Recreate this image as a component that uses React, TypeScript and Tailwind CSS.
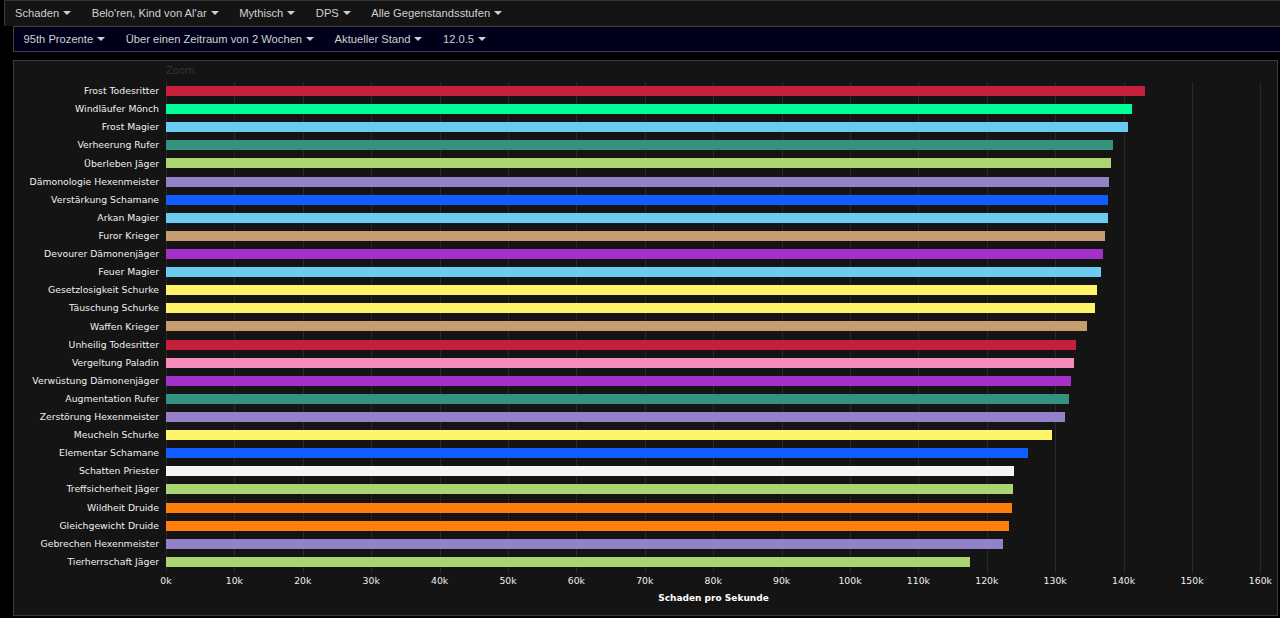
const mainMenu = ["Schaden", "Belo'ren, Kind von Al'ar", "Mythisch", "DPS", "Alle Gegenstandsstufen"];
const subMenu = ["95th Prozente", "Über einen Zeitraum von 2 Wochen", "Aktueller Stand", "12.0.5"];

const colors = {
  dk: "#c41f3b",
  monk: "#00ff96",
  mage: "#69ccf0",
  evoker: "#33937f",
  hunter: "#abd473",
  warlock: "#9482c9",
  shaman: "#0f5cff",
  warrior: "#c79c6e",
  dh: "#a330c9",
  rogue: "#fff569",
  paladin: "#f58cba",
  priest: "#f5f5f5",
  druid: "#ff7d0a",
};

// end of each bar in dps
const rows: [string, string, number][] = [
  ["Frost Todesritter", colors.dk, 143200],
  ["Windläufer Mönch", colors.monk, 141300],
  ["Frost Magier", colors.mage, 140700],
  ["Verheerung Rufer", colors.evoker, 138400],
  ["Überleben Jäger", colors.hunter, 138150],
  ["Dämonologie Hexenmeister", colors.warlock, 137900],
  ["Verstärkung Schamane", colors.shaman, 137650],
  ["Arkan Magier", colors.mage, 137650],
  ["Furor Krieger", colors.warrior, 137350],
  ["Devourer Dämonenjäger", colors.dh, 137000],
  ["Feuer Magier", colors.mage, 136750],
  ["Gesetzlosigkeit Schurke", colors.rogue, 136150],
  ["Täuschung Schurke", colors.rogue, 135800],
  ["Waffen Krieger", colors.warrior, 134600],
  ["Unheilig Todesritter", colors.dk, 133000],
  ["Vergeltung Paladin", colors.paladin, 132750],
  ["Verwüstung Dämonenjäger", colors.dh, 132300],
  ["Augmentation Rufer", colors.evoker, 132000],
  ["Zerstörung Hexenmeister", colors.warlock, 131500],
  ["Meucheln Schurke", colors.rogue, 129600],
  ["Elementar Schamane", colors.shaman, 126000],
  ["Schatten Priester", colors.priest, 123950],
  ["Treffsicherheit Jäger", colors.hunter, 123850],
  ["Wildheit Druide", colors.druid, 123700],
  ["Gleichgewicht Druide", colors.druid, 123300],
  ["Gebrechen Hexenmeister", colors.warlock, 122300],
  ["Tierherrschaft Jäger", colors.hunter, 117600],
];

const ticks = Array.from({ length: 17 }, (_, i) => i * 10);
const pxPerK = 6.84;

function Menu({ items }: { items: string[] }) {
  return (
    <ul className="flex font-['Liberation_Sans',sans-serif] text-[11.2px] text-[#d0d0d0]">
      {items.map((item) => (
        <li key={item} className="flex items-center gap-[4px] pr-[20.5px]">
          {item}
          <span className="h-0 w-0 border-x-[4px] border-t-[4px] border-x-transparent border-t-[#d0d0d0]"></span>
        </li>
      ))}
    </ul>
  );
}

export default function App() {
  return (
    <main className="h-[618px] overflow-hidden bg-black font-['DejaVu_Sans',sans-serif]">
      <nav className="ml-[4px] flex h-[26px] items-center border-t border-l border-t-[#333] border-l-[#3a3a3a] bg-[#141414] pl-[10px]">
        <Menu items={mainMenu} />
      </nav>

      <nav className="ml-[13px] flex h-[26px] items-center border-y border-l border-[#3c4050] bg-[#00001a] pl-[9.5px]">
        <Menu items={subMenu} />
      </nav>

      {/* chart panel */}
      <section className="mt-[8px] ml-[13px] mr-[2px] h-[556px] border border-[#3a3a3a] bg-[#141414]">
        <div className="pt-[3px] pl-[152px] text-[10px] leading-[13px] text-[#333]">Zoom</div>

        <div className="relative mt-[5px]">
          {/* grid lines */}
          <div className="absolute top-0 bottom-[-2px] left-[152px] flex">
            {ticks.map((t) => (
              <div
                key={t}
                className="absolute top-0 bottom-0 w-px bg-[#282828]"
                style={{ left: t * pxPerK }}
              ></div>
            ))}
          </div>

          <div className="relative flex flex-col">
            {rows.map(([name, color, value]) => (
              <div key={name} className="flex h-[18.115px] items-center">
                <div className="w-[145px] shrink-0 whitespace-nowrap text-right text-[9.3px] text-[#f0f0f0]">{name}</div>
                <div className="ml-[7px] h-[10px]" style={{ width: (value / 1000) * pxPerK, backgroundColor: color }}></div>
              </div>
            ))}
          </div>
        </div>

        <div className="relative mt-[1px] ml-[152px] h-[17px] text-[9.3px] leading-[17px] text-[#f0f0f0]">
          {ticks.map((t) => (
            <span key={t} className="absolute -translate-x-1/2" style={{ left: t * pxPerK }}>
              {t}k
            </span>
          ))}
        </div>
        <div className="mt-[2px] pl-[152px]">
          <div className="w-[1095px] text-center text-[9px] leading-[14px] font-bold text-white">Schaden pro Sekunde</div>
        </div>
      </section>
    </main>
  );
}
